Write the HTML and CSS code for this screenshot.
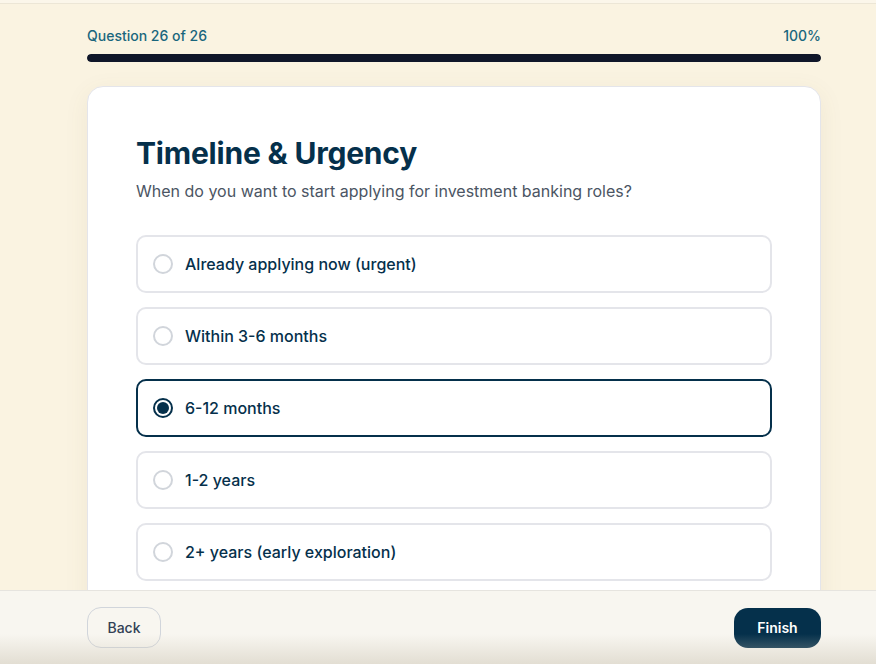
FILE: index.html
```html
<!DOCTYPE html>
<html lang="en">
<head>
  <meta charset="UTF-8" />
  <meta name="viewport" content="width=device-width, initial-scale=1.0" />
  <title>Timeline & Urgency</title>
  <link rel="stylesheet" href="styles.css">
</head>
<body>
  <div class="topbar"></div>

  <main class="wrap">
    <div class="progress-info">
      <span>Question 26 of 26</span>
      <span>100%</span>
    </div>
    <div class="progress"><div class="progress-fill" style="width: 100%"></div></div>

    <section class="card">
      <h1>Timeline &amp; Urgency</h1>
      <p class="lead">When do you want to start applying for investment banking roles?</p>

      <div class="options">
        <label class="option">
          <span class="radio"></span>
          Already applying now (urgent)
        </label>
        <label class="option">
          <span class="radio"></span>
          Within 3-6 months
        </label>
        <label class="option selected">
          <span class="radio"></span>
          6-12 months
        </label>
        <label class="option">
          <span class="radio"></span>
          1-2 years
        </label>
        <label class="option">
          <span class="radio"></span>
          2+ years (early exploration)
        </label>
      </div>
    </section>
  </main>

  <footer class="footer">
    <div class="footer-inner">
      <button class="btn-back">Back</button>
      <button class="btn-finish">Finish</button>
    </div>
  </footer>
</body>
</html>
```

FILE: styles.css
```css
:root {
  --navy: #05304b;
  --teal: #19667d;
  --cream: #faf3e1;
  --border: #e4e5ea;
}

* {
  margin: 0;
  padding: 0;
  box-sizing: border-box;
  font-family: 'Inter', 'Liberation Sans', sans-serif;
}

body {
  background: var(--cream);
  height: 100vh;
  overflow: hidden;
  color: var(--navy);
}

.topbar {
  height: 4px;
  background: #fbf6ea;
  border-bottom: 1px solid #ece6d6;
}

.wrap {
  padding: 0 55px 0 87px;
}

.progress-info {
  display: flex;
  justify-content: space-between;
  margin-top: 23px;
  font-size: 14px;
  line-height: 18px;
  font-weight: 500;
  color: var(--teal);
}

.progress {
  margin-top: 9px;
  height: 8px;
  border-radius: 8px;
  background: #e5e0d2;
  overflow: hidden;
}

.progress-fill {
  height: 100%;
  background: #0f1629;
  border-radius: 8px;
}

.card {
  margin-top: 24px;
  background: #fff;
  border: 1px solid var(--border);
  border-radius: 16px;
  padding: 46px 48px 48px;
  box-shadow: 0 6px 24px rgba(120, 100, 60, 0.08);
}

h1 {
  font-size: 30px;
  line-height: 40px;
  font-weight: 700;
  color: var(--navy);
  letter-spacing: -0.2px;
}

.lead {
  margin-top: 6px;
  font-size: 16px;
  line-height: 24px;
  color: #4b5563;
}

.options {
  margin-top: 32px;
  display: flex;
  flex-direction: column;
  gap: 14px;
}

.option {
  display: flex;
  align-items: center;
  gap: 12px;
  height: 58px;
  padding: 0 15px;
  border: 2px solid var(--border);
  border-radius: 10px;
  font-size: 16px;
  font-weight: 500;
  color: var(--navy);
  cursor: pointer;
}

.option.selected {
  border-color: var(--navy);
}

.radio {
  width: 20px;
  height: 20px;
  border: 2px solid #d1d5db;
  border-radius: 50%;
  flex-shrink: 0;
  display: flex;
  align-items: center;
  justify-content: center;
}

.option.selected .radio {
  border-color: var(--navy);
}

.option.selected .radio::after {
  content: "";
  width: 12px;
  height: 12px;
  border-radius: 50%;
  background: var(--navy);
}

.footer {
  position: fixed;
  left: 0;
  right: 0;
  bottom: 0;
  height: 74px;
  background: #f8f6f0;
  border-top: 1px solid #e6e4df;
}

.footer::after {
  content: "";
  position: absolute;
  left: 0;
  right: 0;
  bottom: 0;
  height: 30px;
  background: linear-gradient(to bottom, rgba(205, 198, 182, 0), rgba(205, 198, 182, 0.5));
  pointer-events: none;
}

.footer-inner {
  display: flex;
  justify-content: space-between;
  align-items: center;
  padding: 16px 55px 0 87px;
}

.btn-back,
.btn-finish {
  height: 41px;
  border-radius: 14px;
  font-size: 14px;
  font-weight: 500;
  cursor: pointer;
}

.btn-back {
  width: 74px;
  background: transparent;
  border: 1px solid #d1d5db;
  color: #334155;
}

.btn-finish {
  width: 87px;
  height: 40px;
  background: var(--navy);
  border: none;
  color: #fff;
  font-weight: 600;
}
```
